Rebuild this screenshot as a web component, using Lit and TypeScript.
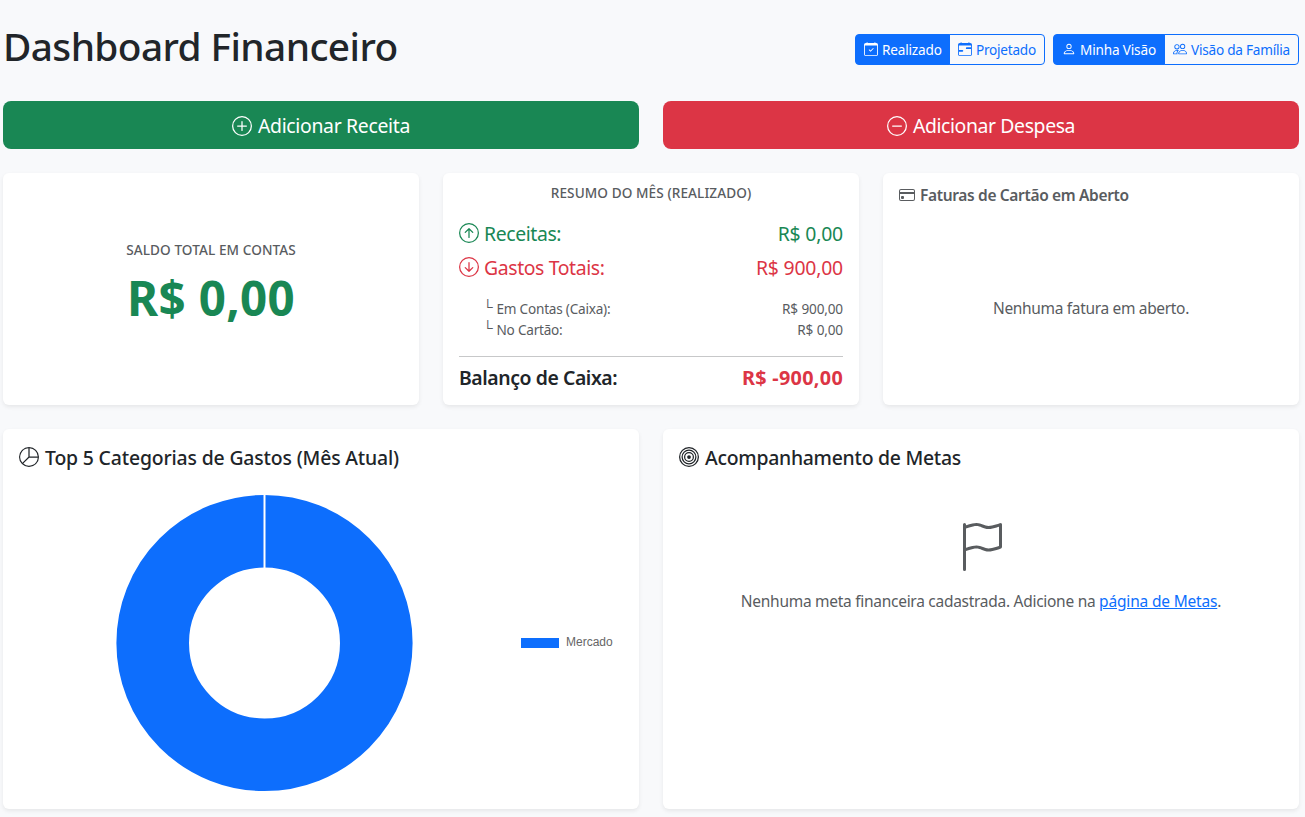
import { LitElement, html, css, svg, SVGTemplateResult } from "lit";
import { customElement, property } from "lit/decorators.js";

const ring = svg`<path d="M8 15A7 7 0 1 1 8 1a7 7 0 0 1 0 14m0 1A8 8 0 1 0 8 0a8 8 0 0 0 0 16"/>`;
const calendar = svg`<path d="M3.5 0a.5.5 0 0 1 .5.5V1h8V.5a.5.5 0 0 1 1 0V1h1a2 2 0 0 1 2 2v11a2 2 0 0 1-2 2H2a2 2 0 0 1-2-2V3a2 2 0 0 1 2-2h1V.5a.5.5 0 0 1 .5-.5M1 4v10a1 1 0 0 0 1 1h12a1 1 0 0 0 1-1V4z"/>`;

const icons: Record<string, SVGTemplateResult> = {
  "calendar-check": svg`${calendar}<path d="M10.854 7.146a.5.5 0 0 1 0 .708l-3 3a.5.5 0 0 1-.708 0l-1.5-1.5a.5.5 0 1 1 .708-.708L7.5 9.793l2.646-2.647a.5.5 0 0 1 .708 0"/>`,
  "calendar-range": svg`${calendar}<path d="M9 7a1 1 0 0 1 1-1h5v2h-5a1 1 0 0 1-1-1M1 9h4a1 1 0 0 1 0 2H1z"/>`,
  person: svg`<path d="M8 8a3 3 0 1 0 0-6 3 3 0 0 0 0 6m2-3a2 2 0 1 1-4 0 2 2 0 0 1 4 0m4 8c0 1-1 1-1 1H3s-1 0-1-1 1-4 6-4 6 3 6 4m-1-.004c-.001-.246-.154-.986-.832-1.664C11.516 10.68 10.289 10 8 10s-3.516.68-4.168 1.332c-.678.678-.83 1.418-.832 1.664z"/>`,
  people: svg`<path d="M15 14s1 0 1-1-1-4-5-4-5 3-5 4 1 1 1 1zm-7.978-1L7 12.996c.001-.264.167-1.03.76-1.72C8.312 10.629 9.282 10 11 10c1.717 0 2.687.63 3.24 1.276.593.69.758 1.457.76 1.72l-.008.002-.014.002zM11 7a2 2 0 1 0 0-4 2 2 0 0 0 0 4m3-2a3 3 0 1 1-6 0 3 3 0 0 1 6 0M6.936 9.28a6 6 0 0 0-1.23-.247A7 7 0 0 0 5 9c-4 0-5 3-5 4q0 1 1 1h4.216A2.24 2.24 0 0 1 5 13c0-1.01.377-2.042 1.09-2.904.243-.294.526-.569.846-.816M4.92 10A5.5 5.5 0 0 0 4 13H1c0-.26.164-1.03.76-1.724.545-.636 1.492-1.256 3.16-1.275ZM1.5 5.5a3 3 0 1 1 6 0 3 3 0 0 1-6 0m3-2a2 2 0 1 0 0 4 2 2 0 0 0 0-4"/>`,
  plus: svg`${ring}<path d="M8 4a.5.5 0 0 1 .5.5v3h3a.5.5 0 0 1 0 1h-3v3a.5.5 0 0 1-1 0v-3h-3a.5.5 0 0 1 0-1h3v-3A.5.5 0 0 1 8 4"/>`,
  dash: svg`${ring}<path d="M4 8a.5.5 0 0 1 .5-.5h7a.5.5 0 0 1 0 1h-7A.5.5 0 0 1 4 8"/>`,
  up: svg`${ring}<path d="M8.5 11.5a.5.5 0 0 1-1 0V5.707L5.354 7.854a.5.5 0 1 1-.708-.708l3-3a.5.5 0 0 1 .708 0l3 3a.5.5 0 0 1-.708.708L8.5 5.707z"/>`,
  down: svg`${ring}<path d="M8.5 4.5a.5.5 0 0 0-1 0v5.793L5.354 8.146a.5.5 0 1 0-.708.708l3 3a.5.5 0 0 0 .708 0l3-3a.5.5 0 0 0-.708-.708L8.5 10.293z"/>`,
  card: svg`<path d="M0 4a2 2 0 0 1 2-2h12a2 2 0 0 1 2 2v8a2 2 0 0 1-2 2H2a2 2 0 0 1-2-2zm2-1a1 1 0 0 0-1 1v1h14V4a1 1 0 0 0-1-1zm13 4H1v5a1 1 0 0 0 1 1h12a1 1 0 0 0 1-1z"/><path d="M2 10a1 1 0 0 1 1-1h1a1 1 0 0 1 1 1v1a1 1 0 0 1-1 1H3a1 1 0 0 1-1-1z"/>`,
  pie: svg`<path d="M7.5 1.018a7 7 0 0 0-4.79 11.566L7.5 7.793zm1 0V7.5h6.482A7 7 0 0 0 8.5 1.018M14.982 8.5H8.207l-4.79 4.79A7 7 0 0 0 14.982 8.5M0 8a8 8 0 1 1 16 0A8 8 0 0 1 0 8"/>`,
  bullseye: svg`<g fill="none" stroke="currentColor"><circle cx="8" cy="8" r="7.5"/><circle cx="8" cy="8" r="5.5"/><circle cx="8" cy="8" r="3.5"/></g><circle cx="8" cy="8" r="1.5"/>`,
  flag: svg`<path d="M14.778.085A.5.5 0 0 1 15 .5V8a.5.5 0 0 1-.314.464L14.5 8l.186.464-.003.001-.006.003-.023.009a12 12 0 0 1-.397.15c-.264.095-.631.223-1.047.35-.816.252-1.879.523-2.71.523-.847 0-1.548-.28-2.158-.525l-.028-.01C7.68 8.71 7.14 8.5 6.5 8.5c-.7 0-1.638.23-2.437.477A20 20 0 0 0 3 9.342V15.5a.5.5 0 0 1-1 0V.5a.5.5 0 0 1 1 0v.282c.226-.079.496-.17.79-.26C4.606.272 5.67 0 6.5 0c.84 0 1.524.277 2.121.519l.043.018C9.286.788 9.828 1 10.5 1c.7 0 1.638-.23 2.437-.477a20 20 0 0 0 1.349-.476l.019-.007.004-.002h.001M14 1.221c-.22.078-.48.167-.766.255-.81.252-1.872.523-2.734.523-.886 0-1.592-.286-2.203-.534l-.008-.003C7.662 1.21 7.139 1 6.5 1c-.669 0-1.606.229-2.415.478A21 21 0 0 0 3 1.845v6.433c.22-.078.48-.167.766-.255C4.576 7.77 5.638 7.5 6.5 7.5c.847 0 1.548.28 2.158.525l.028.01C9.32 8.29 9.86 8.5 10.5 8.5c.668 0 1.606-.229 2.415-.478A21 21 0 0 0 14 7.655V1.222z"/>`,
};

@customElement("bi-icon")
export class BiIcon extends LitElement {
  @property() name = "";
  static styles = css`
    :host { display: block; flex: none; width: 1em; height: 1em; }
    svg { display: block; width: 100%; height: 100%; fill: currentColor; }
  `;
  render() {
    return html`<svg viewBox="0 0 16 16">${icons[this.name]}</svg>`;
  }
}

@customElement("app-root")
export class AppRoot extends LitElement {
  static styles = css`
    :host {
      display: block;
      box-sizing: border-box;
      height: 817px;
      overflow: hidden;
      padding: 22px 6px 0 3px;
      background: #f8f9fb;
      color: #212529;
      font-family: "Noto Sans", "Open Sans", sans-serif;
    }
    * { box-sizing: border-box; }
    header { display: flex; justify-content: space-between; height: 79px; }
    h1, h2, h3, p { margin: 0; font-weight: 500; }
    h1 { font-size: 38.8px; line-height: 48px; letter-spacing: -0.59px; white-space: nowrap; }
    .switches { display: flex; gap: 8px; padding-top: 12px; }
    .group { display: flex; height: 31px; }
    .opt {
      display: flex; gap: 4px; padding: 4px 8px;
      border: 1px solid #0d6efd; color: #0d6efd;
      font-size: 13.6px; line-height: 21px; white-space: nowrap;
    }
    .opt bi-icon { font-size: 14px; margin-top: 3px; }
    .opt:first-child { border-radius: 4px 0 0 4px; }
    .opt:last-child { border-radius: 0 4px 4px 0; margin-left: -1px; }
    .opt.on { background: #0d6efd; color: #fff; }
    .realizado { width: 95px; letter-spacing: -0.18px; }
    .projetado { width: 96px; letter-spacing: -0.24px; }
    .minha { width: 112px; letter-spacing: -0.17px; }
    .familia { width: 135px; letter-spacing: -0.23px; }

    .grid { display: grid; grid-template-columns: repeat(6, 1fr); gap: 24px; grid-template-rows: 48px 232px 380px; }
    .half { grid-column: span 3; }
    .third { grid-column: span 2; }
    .action {
      display: flex; justify-content: center; gap: 6px; padding-top: 10px;
      border-radius: 8px; color: #fff; font-size: 19.4px; line-height: 30px;
    }
    .action bi-icon { font-size: 20px; margin-top: 5px; }
    .income { background: #198754; letter-spacing: -0.32px; }
    .expense { background: #dc3545; letter-spacing: -0.38px; }

    .card { background: #fff; border-radius: 6px; box-shadow: 0 2px 4px rgba(0, 0, 0, 0.075); padding: 0 16px; white-space: nowrap; }
    .muted { color: #595c5f; }
    .green { color: #198754; }
    .red { color: #dc3545; }
    .label { font-size: 13.6px; line-height: 17px; letter-spacing: 0.08px; text-align: center; }
    .balance { padding-top: 68px; text-align: center; }
    .total { margin-top: 11px; font-size: 47.5px; line-height: 58px; font-weight: 700; letter-spacing: 0.35px; }

    .summary { padding-top: 11px; }
    .row { display: flex; justify-content: space-between; }
    .name { display: flex; gap: 5px; }
    .big { font-size: 19.4px; line-height: 32px; height: 30px; letter-spacing: -0.38px; }
    .big bi-icon { font-size: 20px; margin-top: 5px; }
    .big .val { letter-spacing: -0.2px; }
    .in { margin-top: 17px; }
    .out { margin-top: 4px; }
    .detail { margin-top: 16px; padding: 0 0 16px 25px; border-bottom: 1px solid #c7c8c9; }
    .small { font-size: 13.6px; line-height: 21px; letter-spacing: -0.23px; }
    .small .val { letter-spacing: -0.15px; }
    .corner { width: 12.5px; margin-left: -1px; margin-right: 1px; font: 14px/18px "Liberation Sans", sans-serif; letter-spacing: 0; }
    .small .name { gap: 0; }
    .net { margin-top: 6px; font-size: 19.4px; line-height: 30px; font-weight: 600; letter-spacing: -0.42px; }
    .net .val { font-size: 19.8px; font-weight: 700; letter-spacing: 0.3px; }

    .bills-title { display: flex; gap: 5px; padding-top: 13px; font-size: 15.5px; line-height: 19px; font-weight: 600; letter-spacing: -0.34px; }
    .bills-title bi-icon { font-size: 16px; margin-top: 1px; }
    .empty { font-size: 15.5px; line-height: 24px; text-align: center; letter-spacing: -0.33px; font-weight: 400; }
    .bills .empty { margin-top: 91px; }

    .title { display: flex; gap: 6px; padding-top: 16px; font-size: 19.4px; line-height: 26px; height: 40px; letter-spacing: -0.16px; }
    .title bi-icon { font-size: 20px; margin-top: 2px; }
    .goals .title { letter-spacing: -0.26px; }
    .chart { display: flex; align-items: center; padding: 25px 0 0 97px; }
    .donut { display: block; width: 298px; height: 298px; }
    .legend { display: flex; align-items: center; gap: 7px; margin-left: 107px; color: #666; font: 12px/14px "Liberation Sans", Arial, sans-serif; }
    .legend span:last-child { margin-top: -2px; }
    .swatch { width: 38px; height: 10px; background: #0d6efd; }
    .flag { display: block; margin: 54px auto 18px; font-size: 48px; }
    .goals .empty { letter-spacing: -0.28px; }
    a { color: #0d6efd; text-decoration: underline; letter-spacing: -0.18px; }
  `;

  private opt(cls: string, icon: string, text: string) {
    return html`<div class="opt ${cls}"><bi-icon name=${icon}></bi-icon><span>${text}</span></div>`;
  }

  private detail(name: string, value: string) {
    return html`<div class="row small">
      <div class="name"><span class="corner">└</span><span>${name}</span></div>
      <span class="val">${value}</span>
    </div>`;
  }

  private flow(cls: string, icon: string, name: string, value: string) {
    return html`<div class="row big ${cls}">
      <div class="name"><bi-icon name=${icon}></bi-icon><span>${name}</span></div>
      <span class="val">${value}</span>
    </div>`;
  }

  render() {
    return html`
      <header>
        <h1>Dashboard Financeiro</h1>
        <div class="switches">
          <div class="group">
            ${this.opt("on realizado", "calendar-check", "Realizado")}
            ${this.opt("projetado", "calendar-range", "Projetado")}
          </div>
          <div class="group">
            ${this.opt("on minha", "person", "Minha Visão")}
            ${this.opt("familia", "people", "Visão da Família")}
          </div>
        </div>
      </header>
      <main class="grid">
        <div class="action income half"><bi-icon name="plus"></bi-icon><span>Adicionar Receita</span></div>
        <div class="action expense half"><bi-icon name="dash"></bi-icon><span>Adicionar Despesa</span></div>

        <section class="card third balance">
          <h3 class="label muted">SALDO TOTAL EM CONTAS</h3>
          <p class="total green">R$ 0,00</p>
        </section>

        <section class="card third summary">
          <h3 class="label muted">RESUMO DO MÊS (REALIZADO)</h3>
          ${this.flow("in green", "up", "Receitas:", "R$ 0,00")}
          ${this.flow("out red", "down", "Gastos Totais:", "R$ 900,00")}
          <div class="detail muted">
            ${this.detail("Em Contas (Caixa):", "R$ 900,00")}
            ${this.detail("No Cartão:", "R$ 0,00")}
          </div>
          <div class="row net"><span>Balanço de Caixa:</span><span class="val red">R$ -900,00</span></div>
        </section>

        <section class="card third bills">
          <h3 class="bills-title muted"><bi-icon name="card"></bi-icon><span>Faturas de Cartão em Aberto</span></h3>
          <p class="empty muted">Nenhuma fatura em aberto.</p>
        </section>

        <section class="card half">
          <h2 class="title"><bi-icon name="pie"></bi-icon><span>Top 5 Categorias de Gastos (Mês Atual)</span></h2>
          <div class="chart">
            <svg class="donut" viewBox="0 0 298 298">
              <circle cx="148.5" cy="149" r="111.8" fill="none" stroke="#0d6efd" stroke-width="72.6" />
              <path d="M148.5 0V75" stroke="#fff" stroke-width="2" />
            </svg>
            <div class="legend"><span class="swatch"></span><span>Mercado</span></div>
          </div>
        </section>

        <section class="card half goals">
          <h2 class="title"><bi-icon name="bullseye"></bi-icon><span>Acompanhamento de Metas</span></h2>
          <bi-icon class="flag muted" name="flag"></bi-icon>
          <p class="empty muted">Nenhuma meta financeira cadastrada. Adicione na <a>página de Metas</a>.</p>
        </section>
      </main>
    `;
  }
}
